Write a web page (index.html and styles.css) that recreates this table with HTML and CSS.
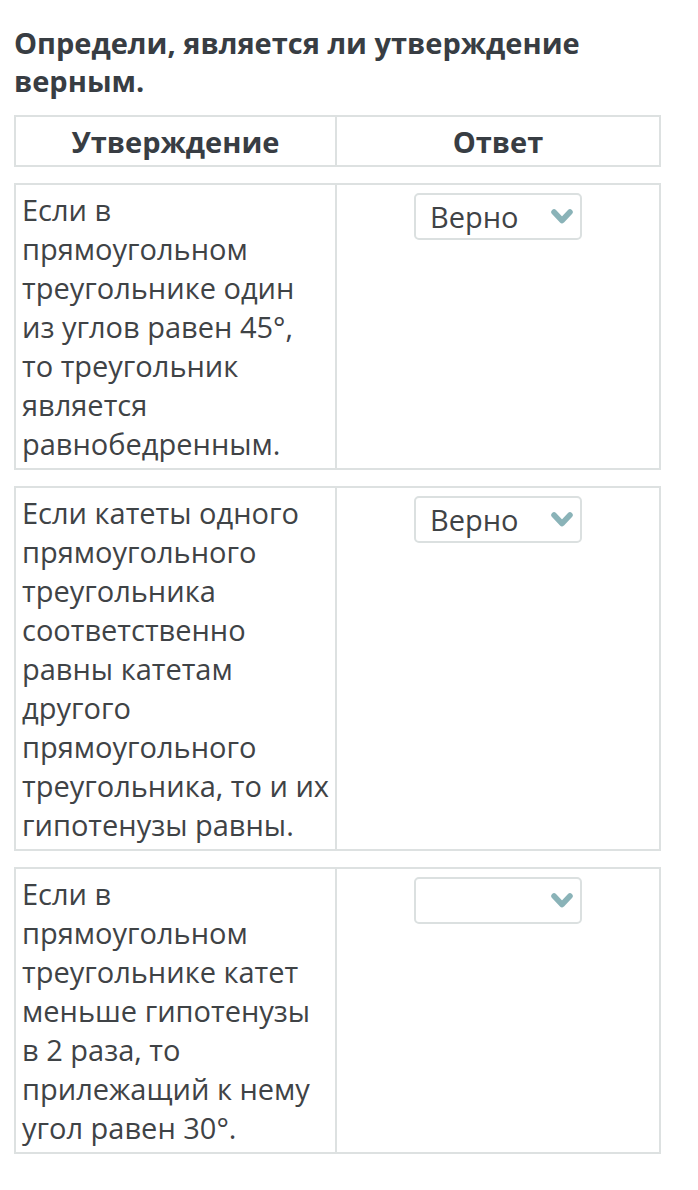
FILE: index.html
```html
<!DOCTYPE html>
<html lang="ru">
<head>
<meta charset="utf-8">
<link rel="stylesheet" href="styles.css">
</head>
<body>
<div class="page">
  <h1 class="title">Определи, является ли утверждение верным.</h1>
  <div class="row head">
    <div class="cell">Утверждение</div>
    <div class="cell">Ответ</div>
  </div>
  <div class="row">
    <div class="cell text">Если в прямоугольном треугольнике один из углов равен 45°, то треугольник является равнобедренным.</div>
    <div class="cell answer">
      <div class="select"><span>Верно</span><svg class="chev" viewBox="0 0 24 20" width="24" height="20"><path d="M4 5 L12 13.5 L20 5" fill="none" stroke="#8ab3b8" stroke-width="5.5" stroke-linecap="round" stroke-linejoin="round"/></svg></div>
    </div>
  </div>
  <div class="row">
    <div class="cell text">Если катеты одного прямоугольного треугольника соответственно равны катетам другого прямоугольного треугольника, то и их гипотенузы равны.</div>
    <div class="cell answer">
      <div class="select"><span>Верно</span><svg class="chev" viewBox="0 0 24 20" width="24" height="20"><path d="M4 5 L12 13.5 L20 5" fill="none" stroke="#8ab3b8" stroke-width="5.5" stroke-linecap="round" stroke-linejoin="round"/></svg></div>
    </div>
  </div>
  <div class="row">
    <div class="cell text">Если в прямоугольном треугольнике катет меньше гипотенузы в 2 раза, то прилежащий к нему угол равен 30°.</div>
    <div class="cell answer">
      <div class="select"><span></span><svg class="chev" viewBox="0 0 24 20" width="24" height="20"><path d="M4 5 L12 13.5 L20 5" fill="none" stroke="#8ab3b8" stroke-width="5.5" stroke-linecap="round" stroke-linejoin="round"/></svg></div>
    </div>
  </div>
</div>
</body>
</html>
```
FILE: styles.css
```css
html, body {
  margin: 0;
  padding: 0;
  background: #ffffff;
}
.page {
  width: 647px;
  padding: 24px 0 0 14px;
  font-family: "Open Sans", "Noto Sans", sans-serif;
  color: #3f4346;
}
.title {
  margin: 0 0 15px 0;
  font-size: 29px;
  line-height: 38px;
  font-weight: 700;
  color: #383d43;
}
.row {
  display: grid;
  grid-template-columns: 321px 1fr;
  border: 2px solid #dde1e1;
  margin-bottom: 16px;
}
.row .cell:first-child {
  border-right: 2px solid #dde1e1;
}
.head {
  height: 52px;
  box-sizing: border-box;
}
.head .cell {
  display: flex;
  align-items: center;
  justify-content: center;
  font-weight: 700;
  font-size: 29px;
  color: #383d43;
}
.text {
  padding: 5px 4px 5px 6px;
  font-size: 29px;
  line-height: 39px;
}
.answer {
  display: flex;
  justify-content: center;
  align-items: flex-start;
  padding-top: 8px;
}
.select {
  width: 168px;
  height: 47px;
  box-sizing: border-box;
  border: 2px solid #dbe0e0;
  border-radius: 5px;
  display: flex;
  align-items: center;
  justify-content: space-between;
  padding: 0 6px 0 14px;
  font-size: 29px;
  color: #3f4346;
}
.chev {
  display: block;
}
```
